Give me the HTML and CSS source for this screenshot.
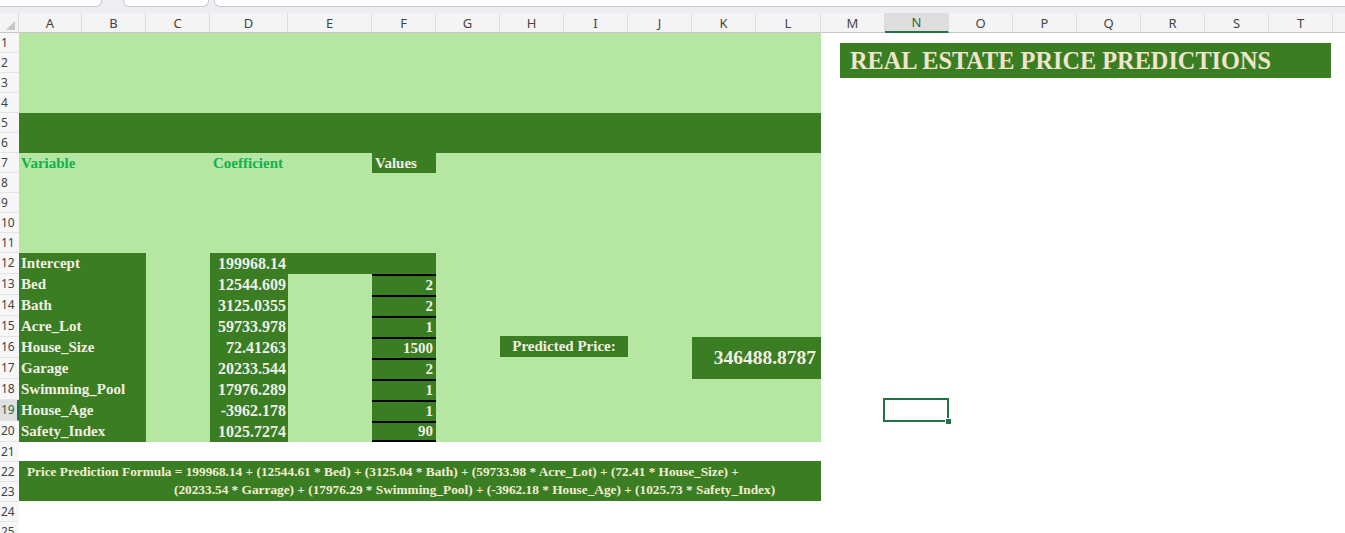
FILE: index.html
```html
<!DOCTYPE html>
<html>
<head>
<meta charset="utf-8">
<title>Real Estate Price Predictions</title>
<link rel="stylesheet" href="styles.css">
</head>
<body>
<div class="app">
  <div class="toolbar">
    <div class="tbox namebox"></div>
    <div class="tbox fxbox"></div>
    <div class="tbox formulabar"></div>
  </div>
  <div class="sheet">
    <div class="ch corner"><svg width="19" height="20" viewBox="0 0 19 20"><polygon points="15,8 15,17 6,17" fill="#c4c6c8"/></svg></div>
    <div class="ch">A</div><div class="ch">B</div><div class="ch">C</div><div class="ch">D</div><div class="ch">E</div><div class="ch">F</div><div class="ch">G</div><div class="ch">H</div><div class="ch">I</div><div class="ch">J</div><div class="ch">K</div><div class="ch">L</div><div class="ch">M</div><div class="ch sel">N</div><div class="ch">O</div><div class="ch">P</div><div class="ch">Q</div><div class="ch">R</div><div class="ch">S</div><div class="ch">T</div><div class="ch"></div>

    <div class="rowheads">
      <div class="rh">1</div><div class="rh">2</div><div class="rh">3</div><div class="rh">4</div><div class="rh">5</div><div class="rh">6</div><div class="rh">7</div><div class="rh">8</div><div class="rh">9</div><div class="rh">10</div><div class="rh">11</div>
      <div class="rh tall">12</div><div class="rh tall">13</div><div class="rh tall">14</div><div class="rh tall">15</div><div class="rh tall">16</div><div class="rh tall">17</div><div class="rh tall">18</div><div class="rh tall sel">19</div><div class="rh tall">20</div>
      <div class="rh">21</div><div class="rh">22</div><div class="rh">23</div><div class="rh">24</div><div class="rh">25</div>
    </div>

    <div class="lg"></div>
    <div class="band"></div>

    <div class="hdr h-var">Variable</div>
    <div class="hdr h-coef">Coefficient</div>
    <div class="h-val">Values</div>

    <div class="labels">
      <div>Intercept</div><div>Bed</div><div>Bath</div><div>Acre_Lot</div><div>House_Size</div><div>Garage</div><div>Swimming_Pool</div><div>House_Age</div><div>Safety_Index</div>
    </div>
    <div class="coefs">
      <div>199968.14</div><div>12544.609</div><div>3125.0355</div><div>59733.978</div><div>72.41263</div><div>20233.544</div><div>17976.289</div><div>-3962.178</div><div>1025.7274</div>
    </div>
    <div class="ext"></div>
    <div class="vals">
      <div>2</div><div>2</div><div>1</div><div>1500</div><div>2</div><div>1</div><div>1</div><div>90</div>
    </div>

    <div class="pp-label">Predicted Price:</div>
    <div class="pp-value">346488.8787</div>

    <div class="formula">
      <div class="f1">Price Prediction Formula = 199968.14 + (12544.61 * Bed) + (3125.04 * Bath) + (59733.98 * Acre_Lot) + (72.41 * House_Size) +</div>
      <div class="f2">(20233.54 * Garrage) + (17976.29 * Swimming_Pool) + (-3962.18 * House_Age) + (1025.73 * Safety_Index)</div>
    </div>

    <div class="title">REAL ESTATE PRICE PREDICTIONS</div>

    <div class="sel-cell"><div class="handle"></div></div>
  </div>
</div>
</body>
</html>
```

FILE: styles.css
```css
html, body {
  margin: 0;
  padding: 0;
  background: #ffffff;
}
body {
  width: 1345px;
  height: 533px;
  overflow: hidden;
}
.app {
  width: 1345px;
  height: 533px;
  overflow: hidden;
  font-family: "Liberation Serif", "Times New Roman", serif;
}

/* top strip */
.toolbar {
  height: 13px;
  background: #eceef1;
  display: flex;
  align-items: flex-start;
}
.tbox {
  height: 7px;
  box-sizing: border-box;
  background: #ffffff;
  border: 1px solid #c8cacd;
  border-top: none;
  border-radius: 0 0 6px 6px;
  flex: none;
}
.namebox { width: 108px; margin-left: -6px; }
.fxbox { width: 86px; margin-left: 21px; }
.formulabar { width: 1150px; margin-left: 5px; }

/* grid */
.sheet {
  display: grid;
  grid-template-columns: 19px 63px 64px 64px 78px 84px 64px 64px 64px 64px 64px 64px 65px repeat(9, 64px);
  grid-template-rows: 20px repeat(11, 20px) repeat(9, 21px) repeat(5, 20px);
  width: 1397px;
}

.ch {
  background: #f4f4f4;
  border-right: 1px solid #dcdcdc;
  border-bottom: 1px solid #c6c6c6;
  box-sizing: border-box;
  font-family: "Noto Sans", "Open Sans", sans-serif;
  font-size: 13px;
  color: #444444;
  display: flex;
  align-items: center;
  justify-content: center;
}
.ch.sel {
  background: #dedede;
  border-bottom: 2px solid #217346;
  color: #1e6b41;
}
.corner { display: block; }
.corner svg { display: block; }

.rowheads {
  grid-column: 1;
  grid-row: 2 / 27;
  display: flex;
  flex-direction: column;
}
.rh {
  height: 20px;
  flex: none;
  box-sizing: border-box;
  border-bottom: 1px solid #e4e4e4;
  background: #f7f7f7;
  font-family: "Noto Sans", "Open Sans", sans-serif;
  font-size: 12px;
  line-height: 19px;
  color: #444444;
  padding-left: 1px;
  white-space: nowrap;
  overflow: hidden;
}
.rh.tall { height: 21px; line-height: 20px; }
.rh.sel {
  background: #e0e0e0;
  border-right: 2px solid #217346;
  color: #1e6b41;
}

/* fills */
.lg {
  grid-column: 2 / 14;
  grid-row: 2 / 22;
  background: #b5e6a2;
}
.band {
  grid-column: 2 / 14;
  grid-row: 6 / 8;
  background: #3b7d23;
}

.hdr {
  grid-row: 8;
  color: #12b04f;
  font-weight: bold;
  font-size: 15px;
  line-height: 21px;
  white-space: nowrap;
}
.h-var { grid-column: 2 / 5; padding-left: 2px; }
.h-coef { grid-column: 5 / 7; padding-left: 3px; }
.h-val {
  grid-column: 7;
  grid-row: 8;
  background: #3b7d23;
  color: #f1efe4;
  font-weight: bold;
  font-size: 15px;
  line-height: 21px;
  padding-left: 3px;
}

.labels, .coefs, .vals {
  display: flex;
  flex-direction: column;
  background: #3b7d23;
  color: #f1efe4;
  font-weight: bold;
}
.labels { grid-column: 2 / 4; grid-row: 13 / 22; }
.labels div {
  height: 21px;
  line-height: 21px;
  font-size: 15px;
  padding-left: 2px;
  white-space: nowrap;
}
.coefs { grid-column: 5; grid-row: 13 / 22; }
.coefs div {
  height: 21px;
  line-height: 21px;
  font-size: 16px;
  text-align: right;
  padding-right: 2px;
  white-space: nowrap;
}
.ext {
  grid-column: 6 / 8;
  grid-row: 13;
  background: #3b7d23;
}
.vals { grid-column: 7; grid-row: 14 / 22; }
.vals div {
  height: 21px;
  box-sizing: border-box;
  border-top: 2px solid #000000;
  line-height: 19px;
  font-size: 15px;
  text-align: right;
  padding-right: 3px;
}
.vals div:last-child {
  height: 21px;
  border-bottom: 2px solid #000000;
  line-height: 17px;
}

.pp-label {
  grid-column: 9 / 11;
  grid-row: 17;
  background: #3b7d23;
  color: #f1efe4;
  font-weight: bold;
  font-size: 15px;
  line-height: 21px;
  text-align: center;
  margin-top: -1px;
  margin-bottom: 1px;
}
.pp-value {
  grid-column: 12 / 14;
  grid-row: 17 / 19;
  background: #3b7d23;
  color: #f1efe4;
  font-weight: bold;
  font-size: 19.5px;
  display: flex;
  align-items: center;
  justify-content: flex-end;
  padding-right: 5px;
}

.formula {
  grid-column: 2 / 14;
  grid-row: 23 / 25;
  margin-top: -1px;
  margin-bottom: 1px;
  background: #3b7d23;
  color: #f1eed2;
  font-weight: bold;
  font-size: 13.3px;
  line-height: 18px;
  padding-top: 2px;
  white-space: nowrap;
}
.f1 { padding-left: 8px; }
.f2 { padding-left: 155px; }

.title {
  grid-column: 14 / 22;
  grid-row: 2 / 5;
  align-self: start;
  margin: 10px 2px 0 19px;
  height: 35px;
  background: #3b7d23;
  color: #f0e4cc;
  font-size: 24.3px;
  font-weight: bold;
  line-height: 36px;
  padding-left: 10px;
  white-space: nowrap;
}

.sel-cell {
  grid-column: 15;
  grid-row: 20;
  margin: -2px 0 -1px -2px;
  border: 2px solid #217346;
  position: relative;
}
.handle {
  position: absolute;
  right: -5px;
  bottom: -5px;
  width: 5px;
  height: 5px;
  background: #217346;
  border: 1px solid #ffffff;
}
```
